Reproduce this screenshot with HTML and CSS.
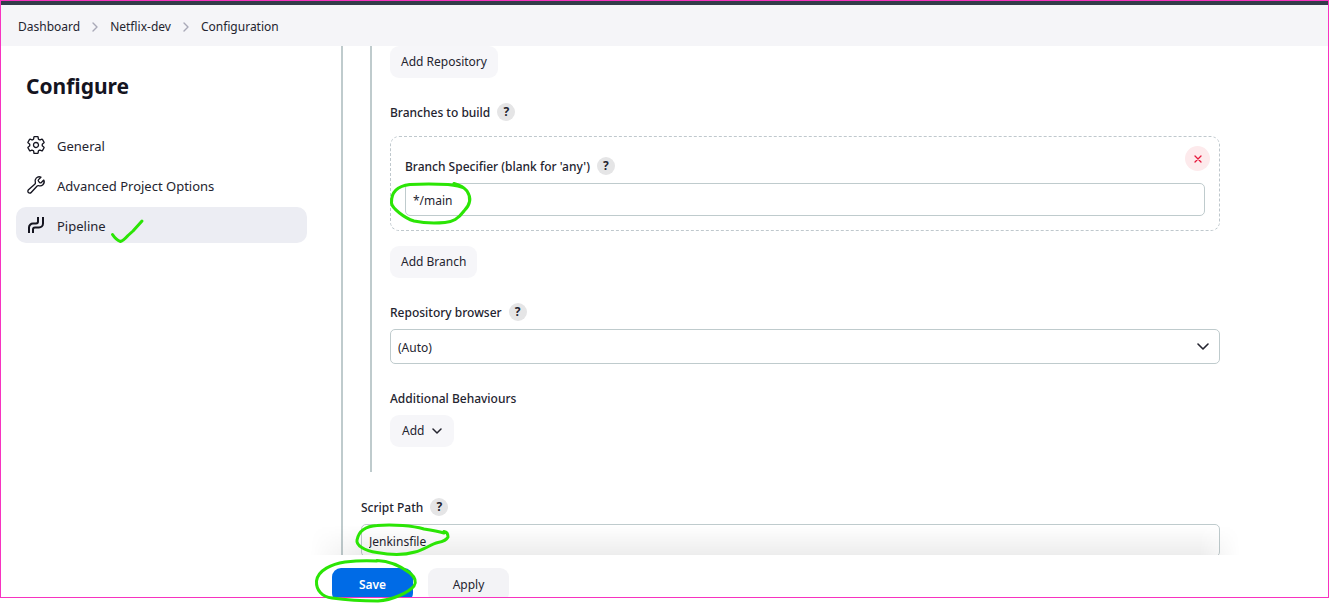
FILE: index.html
```html
<!DOCTYPE html>
<html lang="en">
<head>
<meta charset="utf-8">
<title>Netflix-dev Configuration</title>
<link rel="stylesheet" href="styles.css">
</head>
<body>
<div class="frame">
  <div class="topbar"></div>
  <nav class="breadcrumbs" aria-label="Breadcrumb">
    <a href="#">Dashboard</a>
    <svg class="crumb-sep" viewBox="0 0 6 10"><path d="M1 1l4 4-4 4"/></svg>
    <a href="#">Netflix-dev</a>
    <svg class="crumb-sep" viewBox="0 0 6 10"><path d="M1 1l4 4-4 4"/></svg>
    <a href="#">Configuration</a>
  </nav>
  <div class="page">
    <aside class="sidebar">
      <h1 class="title">Configure</h1>
      <nav class="tasks">
        <a class="task" href="#">
          <svg class="task-icon" viewBox="0 0 512 512"><path d="M262.29 192.31a64 64 0 1 0 57.4 57.4 64.13 64.13 0 0 0-57.4-57.4zM416.39 256a154.34 154.34 0 0 1-1.53 20.79l45.21 35.46a10.81 10.81 0 0 1 2.45 13.75l-42.77 74a10.81 10.81 0 0 1-13.14 4.59l-44.9-18.08a16.11 16.11 0 0 0-15.17 1.75A164.48 164.48 0 0 1 325 400.8a15.94 15.94 0 0 0-8.82 12.14l-6.73 47.89a11.08 11.08 0 0 1-10.68 9.17h-85.54a11.11 11.11 0 0 1-10.69-8.87l-6.72-47.82a16.07 16.07 0 0 0-9-12.22 155.3 155.3 0 0 1-21.46-12.57 16 16 0 0 0-15.11-1.71l-44.89 18.07a10.81 10.81 0 0 1-13.14-4.58l-42.77-74a10.8 10.8 0 0 1 2.45-13.75l38.21-30a16.05 16.05 0 0 0 6-14.08c-.36-4.17-.58-8.33-.58-12.5s.21-8.27.58-12.35a16 16 0 0 0-6.07-13.94l-38.19-30A10.81 10.81 0 0 1 49.48 186l42.77-74a10.81 10.81 0 0 1 13.14-4.59l44.9 18.08a16.11 16.11 0 0 0 15.17-1.75A164.48 164.48 0 0 1 187 111.2a15.94 15.94 0 0 0 8.82-12.14l6.73-47.89A11.08 11.08 0 0 1 213.23 42h85.54a11.11 11.11 0 0 1 10.69 8.87l6.72 47.82a16.07 16.07 0 0 0 9 12.22 155.3 155.3 0 0 1 21.46 12.57 16 16 0 0 0 15.11 1.71l44.89-18.07a10.81 10.81 0 0 1 13.14 4.58l42.77 74a10.8 10.8 0 0 1-2.45 13.75l-38.21 30a16.05 16.05 0 0 0-6.05 14.08c.33 4.14.55 8.3.55 12.47z"/></svg>
          <span>General</span>
        </a>
        <a class="task" href="#">
          <svg class="task-icon" viewBox="0 0 512 512"><path d="M393.87 190a32.1 32.1 0 0 1-45.25 0l-26.57-26.57a32.09 32.09 0 0 1 0-45.26L382.19 58a1 1 0 0 0-.3-1.64c-38.82-16.64-89.15-8.16-121.11 23.57-30.58 30.35-32.32 76-21.12 115.84a31.93 31.93 0 0 1-9.06 32.08L64 380a48.17 48.17 0 1 0 68 68l153.86-167a31.93 31.93 0 0 1 31.6-9.13c39.54 10.59 84.54 8.6 114.72-21.19 32.49-32 39.5-88.56 23.75-120.93a1 1 0 0 0-1.6-.26z"/></svg>
          <span>Advanced Project Options</span>
        </a>
        <a class="task task-active" href="#" aria-current="page">
          <svg class="task-icon task-icon-bold" viewBox="0 0 20 20"><path d="M3 18v-5.500a4 4 0 0 1 4-4h3a2 2 0 0 0 2-2V2M7 18v-3.500a2 2 0 0 1 2-2h4a4 4 0 0 0 4-4V2"/></svg>
          <span>Pipeline</span>
        </a>
      </nav>
    </aside>
    <main class="main">
      <form class="config">
        <section class="definition">
          <div class="scm">
            <button class="btn" type="button">Add Repository</button>
            <div class="label-row group">
              <span>Branches to build</span>
              <button class="help" type="button" aria-label="Help for Branches to build">?</button>
            </div>
            <div class="branch">
              <button class="remove" type="button" aria-label="Delete branch">
                <svg viewBox="0 0 8 8"><path d="M1 1l6 6M7 1L1 7"/></svg>
              </button>
              <div class="label-row">
                <label for="branch">Branch Specifier (blank for 'any')</label>
                <button class="help" type="button" aria-label="Help for Branch Specifier">?</button>
              </div>
              <input class="field" id="branch" type="text" value="*/main">
            </div>
            <button class="btn" type="button">Add Branch</button>
            <div class="label-row group">
              <label for="browser">Repository browser</label>
              <button class="help" type="button" aria-label="Help for Repository browser">?</button>
            </div>
            <div class="select-wrap">
              <select class="field select" id="browser"><option>(Auto)</option></select>
              <svg class="select-arrow" viewBox="0 0 12 8"><path d="M1 1l5 5 5-5"/></svg>
            </div>
            <div class="label-row group"><span>Additional Behaviours</span></div>
            <button class="btn btn-menu" type="button">Add
              <svg viewBox="0 0 10 6"><path d="M1 1l4 4 4-4"/></svg>
            </button>
          </div>
          <div class="label-row group-outer">
            <label for="script">Script Path</label>
            <button class="help" type="button" aria-label="Help for Script Path">?</button>
          </div>
          <input class="field" id="script" type="text" value="Jenkinsfile">
        </section>
      </form>
      <div class="footer">
        <button class="action action-primary" type="submit">Save</button>
        <button class="action" type="button">Apply</button>
      </div>
    </main>
  </div>
</div>
<svg class="marks" viewBox="0 0 1329 604" aria-hidden="true">
  <path d="M112.500 234.500Q116 240 120.500 241.500Q123 241 128 235.500L133 231L142 221"/>
  <path d="M454 183.500Q463 186 467 191C471 197 471 204 464 211C458 219 453 222 445 222.500Q428 224 414 221C404 218 392 208 391.500 203C391 192 397 186 410 184.500C425 183.500 440 184 448 184.500Q460 186 464 188"/>
  <path d="M444 531.500Q448 532 448 537Q446 541 438 542.500C431 544 424 550 415 552C402 556 390 555 377 552.500C364 551 356 545 357 540C359 530 367 526 377 525.500C394 524 413 526 424 529Q437 531 444 533"/>
  <path d="M377 560.500C390 561 402 567 410 573Q418 580 414 586C408 593 392 600 378 601C362 601 346 600 332 598C322 597 316 590 316.500 581C318 570 332 564 345 562Q362 560 377 561"/>
</svg>
</body>
</html>
```
FILE: styles.css
```css
* { box-sizing: border-box; }

body {
  margin: 0;
  height: 100vh;
  padding-bottom: 6px;
  position: relative;
  overflow: hidden;
  background: #fff;
  color: #24242f;
  font: 400 12px/18px "Noto Sans", "Open Sans", sans-serif;
}

a { color: inherit; text-decoration: none; }
button, input, select { font: inherit; color: inherit; margin: 0; }
svg { display: block; fill: none; stroke: currentColor; stroke-linecap: round; stroke-linejoin: round; }

.frame {
  height: 100%;
  display: flex;
  flex-direction: column;
  overflow: hidden;
  border: 1px solid #f733c0;
}

.topbar { flex: none; height: 4px; background: #333c4a; }

.breadcrumbs {
  flex: none;
  display: flex;
  align-items: center;
  gap: 12px;
  height: 41px;
  padding: 2px 17px 0;
  background: #f5f5f8;
}
.crumb-sep { width: 6px; height: 10px; stroke: #a9a9b8; stroke-width: 1.4; }

.page { flex: 1; min-height: 0; display: flex; }

.sidebar { flex: none; width: 306px; padding: 26px 0 0 15px; }
.title { margin: 0 0 27px; padding-left: 10px; font-size: 21px; line-height: 28px; font-weight: 700; color: #14141f; }
.tasks { display: flex; flex-direction: column; gap: 4px; }
.task {
  display: flex;
  align-items: center;
  gap: 11px;
  height: 36px;
  padding: 0 10px;
  border-radius: 10px;
  font-size: 13px;
}
.task span { padding-top: 2px; }
.task-active { background: #ecedf3; }
.task-icon { width: 20px; height: 20px; stroke: #14141f; stroke-width: 34; }
.task-icon-bold { stroke-width: 2; stroke-linecap: butt; }

.main { flex: 1; min-width: 0; display: flex; flex-direction: column; position: relative; }

.config { flex: 1; min-height: 0; overflow: hidden; position: relative; padding: 0 108px 0 34px; }
.config::after {
  content: "";
  position: absolute;
  left: 3px;
  right: 88px;
  bottom: 0;
  height: 30px;
  background: linear-gradient(rgba(0, 0, 0, 0), rgba(0, 0, 0, 0.07));
  mask-image: linear-gradient(90deg, transparent, #000 50px, #000 calc(100% - 40px), transparent);
  pointer-events: none;
}

.definition { border-left: 2px solid #bfcbcd; padding-left: 18px; }
.scm { margin-left: 9px; border-left: 2px solid #bfcbcd; padding: 0 0 25px 18px; }

.label-row { display: flex; align-items: center; gap: 7px; height: 18px; margin-bottom: 8px; font-weight: 500; }
.label-row > :first-child { padding-top: 2px; }
.group { margin-top: 25px; }
.group-outer { margin-top: 26px; }

.help {
  width: 18px;
  height: 18px;
  padding: 0;
  border: 0;
  border-radius: 50%;
  background: #e5e5e6;
  line-height: 18px;
  font-weight: 700;
}

.btn {
  display: block;
  height: 32px;
  padding: 0 11px;
  border: 0;
  border-radius: 9px;
  background: #f6f6f9;
}
.btn-menu { display: flex; align-items: center; gap: 8px; padding: 0 12px; }
.btn-menu svg { width: 10px; height: 6px; stroke-width: 1.5; }

.branch {
  position: relative;
  margin: 15px 0;
  padding: 20px 14px 14px;
  border: 1px dashed #bfc8cd;
  border-radius: 9px;
}
.remove {
  position: absolute;
  top: 9px;
  right: 9px;
  width: 25px;
  height: 25px;
  display: grid;
  place-items: center;
  padding: 0;
  border: 0;
  border-radius: 50%;
  background: #fdeaec;
  color: #e6183c;
}
.remove svg { width: 8px; height: 8px; stroke-width: 1.3; }

.field {
  display: block;
  width: 100%;
  height: 33px;
  padding: 2px 7px 0;
  border: 1px solid #bfcbcd;
  border-radius: 5px;
  background: #fff;
}
.select-wrap { position: relative; }
.select { height: 35px; appearance: none; }
.select-arrow { position: absolute; right: 11px; top: 14px; width: 12px; height: 8px; stroke-width: 1.6; pointer-events: none; }

.footer {
  flex: none;
  display: flex;
  gap: 15px;
  height: 42px;
  padding: 13px 25px 0;
  background: #fff;
}
.action {
  flex: none;
  width: 81px;
  height: 34px;
  padding: 0;
  border: 0;
  border-radius: 9px;
  background: #f3f3f6;
}
.action-primary { background: #006be6; color: #fff; font-weight: 600; }

.marks {
  position: absolute;
  left: 0;
  top: 0;
  width: 1329px;
  height: 604px;
  stroke: #2be505;
  stroke-width: 3;
  pointer-events: none;
}
```
